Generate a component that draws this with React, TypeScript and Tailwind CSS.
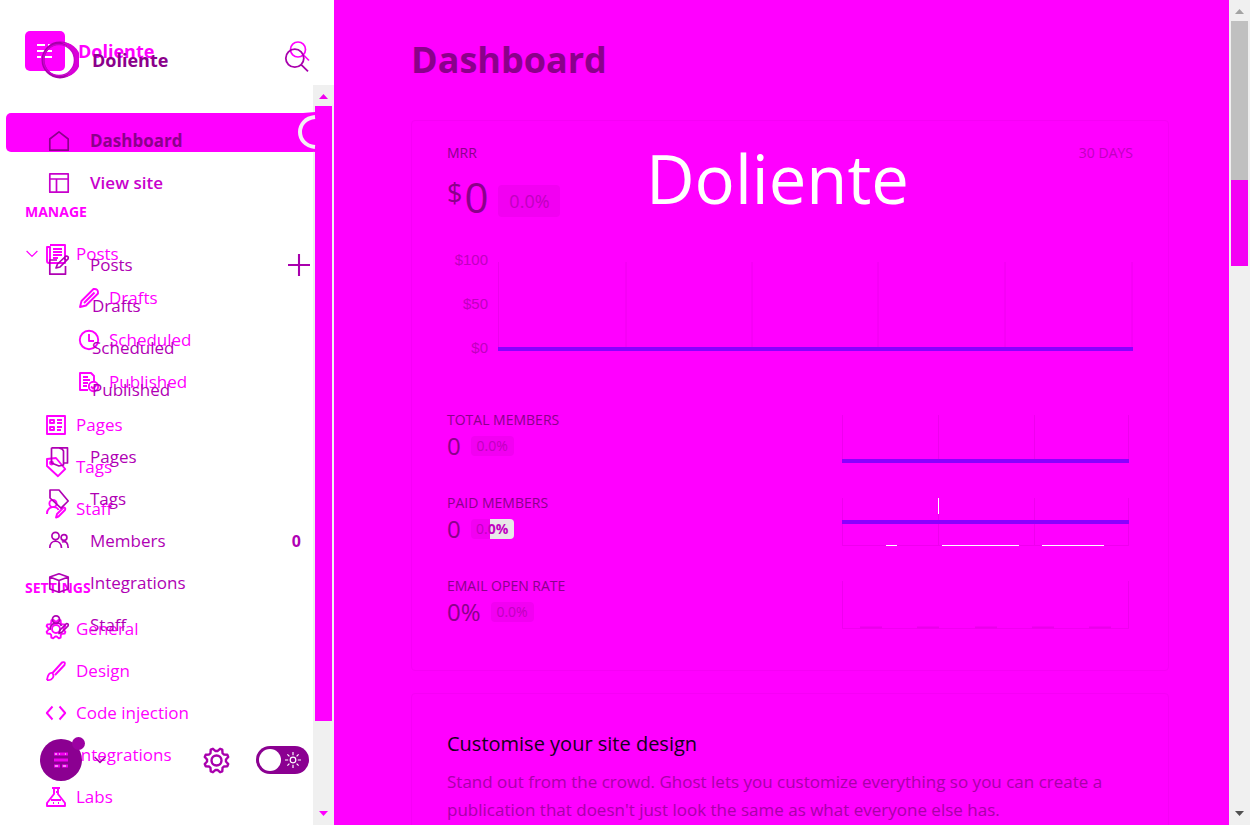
import React from "react";

type Glyph = { d: string; w?: number; size?: string };

function Icon({ d, w = 1.7, size = "size-5" }: Glyph) {
  return (
    <svg viewBox="0 0 20 20" className={`${size} shrink-0 overflow-visible`} fill="none" stroke="currentColor" strokeWidth={w} strokeLinejoin="round" aria-hidden="true">
      <path d={d} />
    </svg>
  );
}

const circle = (x: number, y: number, r: number) => `M${x - r} ${y}a${r} ${r} 0 1 0 ${2 * r} 0a${r} ${r} 0 1 0 ${-2 * r} 0`;

const gearPoints = Array.from({ length: 32 }, (_, i) => {
  const a = (Math.PI * 2 * (i - 0.5)) / 32 + Math.PI / 8;
  const r = i % 4 < 2 ? 9.8 : 7.6;
  return `${(10 + r * Math.cos(a)).toFixed(2)} ${(10 + r * Math.sin(a)).toFixed(2)}`;
});
const gear = `M${gearPoints.join("L")}Z${circle(10, 10, 4)}`;
const staff = `${circle(7, 4.5, 3.6)}M1 15C1 6.5 11 6.5 12.5 11M10 18.5L11 15L17.5 8.5Q20 8.5 19 11L12.5 17.5Z`;

const icons = {
  home: "M.8 8L10 .8L19.2 8V19.2H.8Z",
  layout: "M.8.8H19.2V19.2H.8ZM.8 6H19.2M7.5 6V19.2",
  compose: "M8 5H.8V19.2H16.5V11M7 13L8.5 9L17 1Q20 1 19 4L11 12ZM15 3L17 5",
  plus: "M10 0V20M0 10H20",
  pages: "M2.5 .8H18.5V16H14.5M2.5 .8V16L10 19L14.5 18V4Q14 2 10 1",
  tag: "M1 1H10L19.2 12L12 19.2L1 9Z",
  members: `${circle(6.5, 5, 3.6)}${circle(15, 6.5, 2.9)}M.8 17C.8 8 12 8 12.5 17M13 11C17 9.5 19.2 12 19.2 17`,
  cube: "M10 .8L19.2 4V16L10 19.2L.8 16V4ZM.8 4L10 7.5L19.2 4M10 7.5V19.2",
  staff,
  news: "M4 1H19V19H3Q1 19 1 17V3H4V17M7 5H16M7 8H16M7 11H16M7 14H12",
  pencil: "M1 19L2.5 13L14.5 1Q19.5 .5 19 5.5L7 17.5ZM5 15L15.5 4.5",
  clock: `${circle(10, 10, 9.2)}M10 4V11H15`,
  published: `M9 18H1V1H12L15 4V9M4 5H9M4 8H11M4 11H9M4 14H8${circle(14.5, 14.5, 4.7)}M12 14.5L14 16.5L17.5 13`,
  list: "M1 1H19V19H1ZM4 5H8V8H4ZM4 12H8V15H4ZM11 5H16M11 8H16M11 12H16M11 15H15",
  label: `M1 2L10 1L19.2 12L12 19.2L1 9Z${circle(5.5, 6, 1.5)}`,
  gear,
  brush: "M1 19Q2 11 6.5 12Q9 16 5 18.5Q3 19.5 1 19M6.5 12L16 1.5Q20 0 18.5 4L9 14",
  code: "M6.5 3.5L.8 10L6.5 16.5M13.5 3.5L19.2 10L13.5 16.5",
  labs: "M6 1H14M8 1V7L1 16V19H19V16L12 7V1M5 13H15M7 16H8M12 16H13M10 5H12",
  search: `${circle(9, 8.5, 7.5)}M14.5 14L20 19.5`,
  down: "M1 5L10 14L19 5",
};

type Row = { label: string; icon?: keyof typeof icons; count?: string };

const primary: Row[] = [
  { label: "Pages", icon: "pages" },
  { label: "Tags", icon: "tag" },
  { label: "Members", icon: "members", count: "0" },
  { label: "Integrations", icon: "cube" },
  { label: "Staff", icon: "staff" },
];

function DarkRow({ label, icon, count, weight = "font-medium", tone = "text-[#b000b4]" }: Row & { weight?: string; tone?: string }) {
  return (
    <a href="#" className={`flex h-[42px] items-center pr-[33px] pl-[49px] ${tone}`}>
      {icon ? <Icon d={icons[icon]} /> : <span className="w-[23px]" />}
      <span className={`${icon ? "ml-[21px]" : "ml-5"} ${weight}`}>{label}</span>
      {count && <span className="ml-auto text-base font-bold">{count}</span>}
    </a>
  );
}

function BrightRow({ label, icon, nested }: Row & { nested?: boolean }) {
  return (
    <a href="#" className={`flex h-[42px] items-center gap-[10px] ${nested ? "pl-[79px]" : "pl-[46px]"}`}>
      {icon ? <Icon d={icons[icon]} w={1.9} /> : <span className="w-5" />}
      <span className="font-medium">{label}</span>
    </a>
  );
}

function BrightLayer() {
  return (
    <div className="flex h-full flex-col overflow-hidden text-[#ff00ff]">
      <div className="flex h-[102px] shrink-0 items-center px-[25px]">
        <div className="flex size-10 items-center justify-center rounded-[5px] bg-[#ff00ff] text-white">
          <Icon d="M2 4H10M13 4H17M2 10H17M2 16H6M9 16H17" w={2} />
        </div>
        <strong className="ml-[13px] text-[18px] font-bold">Doliente</strong>
        <span className="ml-auto"><Icon d={icons.search} /></span>
      </div>
      <div className="mt-[11px] h-[39px] shrink-0 pl-[6px]">
        <div className="h-[39px] rounded-[5px] bg-[#ff00ff]" />
      </div>
      <h2 className="mt-[50px] h-5 shrink-0 pl-[25px] text-[14px] leading-5 font-bold">MANAGE</h2>
      <nav className="mt-[11px]" aria-label="Manage">
        <div className="relative">
          <BrightRow label="Posts" icon="news" />
          <span className="absolute top-[15px] left-[26px]"><Icon d={icons.down} size="size-3" w={2} /></span>
        </div>
        <div className="mt-[2px]">
          <BrightRow label="Drafts" icon="pencil" nested />
          <BrightRow label="Scheduled" icon="clock" nested />
          <BrightRow label="Published" icon="published" nested />
        </div>
        <div className="mt-[1px]">
          <BrightRow label="Pages" icon="list" />
          <BrightRow label="Tags" icon="label" />
          <BrightRow label="Staff" icon="staff" />
        </div>
      </nav>
      <h2 className="mt-12 h-5 shrink-0 pl-[25px] text-[14px] leading-5 font-bold">SETTINGS</h2>
      <nav className="mt-[10px]" aria-label="Settings">
        <BrightRow label="General" icon="gear" />
        <BrightRow label="Design" icon="brush" />
        <BrightRow label="Code injection" icon="code" />
        <BrightRow label="Integrations" />
        <BrightRow label="Labs" icon="labs" />
      </nav>
    </div>
  );
}

function DarkLayer() {
  return (
    <div className="absolute inset-0 flex flex-col overflow-hidden">
      <div className="flex h-[120px] shrink-0 items-center pr-[26px] pl-[41px] text-[#8b008b]">
        <svg viewBox="0 0 38 38" className="size-[38px]" fill="none" aria-hidden="true">
          <circle cx="19" cy="19" r="17" stroke="#a600aa" strokeWidth="3" />
          <path d="M20 1.5A17 17 0 0 1 24 36A19 19 0 0 0 20 1.5Z" fill="#d900d9" />
          <circle cx="18" cy="19" r="15.5" stroke="#c900cd" strokeWidth="1.5" />
        </svg>
        <strong className="ml-[13px] text-[18px] font-bold">Doliente</strong>
        <button type="button" aria-label="Search" className="ml-auto text-[#a900ad]"><Icon d={icons.search} size="size-6" w={1.5} /></button>
      </div>
      <nav aria-label="Primary" className="flex flex-col">
        <DarkRow label="Dashboard" icon="home" weight="font-bold" tone="text-[#8b008b]" />
        <DarkRow label="View site" icon="layout" weight="font-semibold" tone="text-[#c800cc]" />
        <div className="relative mt-10">
          <DarkRow label="Posts" icon="compose" />
          <button type="button" aria-label="New post" className="absolute top-[10px] right-6 text-[#a900ad]"><Icon d={icons.plus} size="size-[22px]" w={1.9} /></button>
        </div>
        <div className="-mt-[1px]">
          <DarkRow label="Drafts" />
          <DarkRow label="Scheduled" />
          <DarkRow label="Published" />
        </div>
        <div className="mt-[25px]">
          {primary.map((r) => <DarkRow key={r.label} {...r} />)}
        </div>
      </nav>
      <div className="absolute inset-x-0 bottom-[43px] flex h-[44px] items-center pr-[25px] pl-10 text-[#a900ad]">
        <button type="button" aria-label="Account" className="relative flex size-[42px] items-center justify-center rounded-full bg-[#8b0091] text-[#f000f0]">
          <svg viewBox="0 0 16 16" className="size-4" aria-hidden="true" strokeWidth="3" stroke="currentColor"><path d="M1 2H15M1 8H15M1 14H7M9 14H15" /><path d="M2 2H4M6 2H7M12 2H13M2 14H5M10 14H13" stroke="#fff" strokeWidth="1" /></svg>
          <span className="absolute -top-[2px] -right-[3px] size-[13px] rounded-full bg-[#9c00a2]" />
        </button>
        <span className="ml-3"><Icon d={icons.down} size="size-3" w={2.5} /></span>
        <button type="button" aria-label="Settings" className="ml-auto"><Icon d={gear} size="size-[25px]" w={1.9} /></button>
        <label className="relative ml-[27px] flex h-7 w-[53px] items-center justify-between rounded-full bg-[#8b0091] pr-2 pl-[3px] text-white">
          <input type="checkbox" aria-label="Dark mode" className="absolute inset-0 m-0 size-full appearance-none rounded-full" />
          <span className="size-[22px] rounded-full bg-white" />
          <Icon d={`${circle(10, 10, 3.5)}M10 0V4M10 16V20M0 10H4M16 10H20M3 3L5.5 5.5M14.5 14.5L17 17M17 3L14.5 5.5M5.5 14.5L3 17`} size="size-4" w={1.5} />
        </label>
      </div>
    </div>
  );
}

function Arrow({ up, tone }: { up?: boolean; tone: string }) {
  return (
    <svg viewBox="0 0 21 21" className={`size-[21px] shrink-0 ${tone}`} fill="currentColor" aria-hidden="true">
      <path d={up ? "M10.5 9L15 14H6Z" : "M6 8H15L10.5 13Z"} />
    </svg>
  );
}

function Sidebar() {
  return (
    <aside className="relative w-[334px] shrink-0 overflow-hidden bg-white text-[17px]">
      <BrightLayer />
      <DarkLayer />
      <div className="absolute top-[85px] right-0 bottom-0 flex w-[21px] flex-col bg-[#f0f0f0] px-[2px]">
        <div className="-mx-[2px] h-[21px]"><Arrow up tone="text-[#f000f0]" /></div>
        <div className="h-[615px] bg-[#ff00ff]" />
        <div className="-mx-[2px] mt-auto h-[22px]"><Arrow tone="text-[#ff00ff]" /></div>
      </div>
      <svg viewBox="0 0 36 40" className="absolute top-[112px] right-0 h-10 w-9" fill="none" aria-hidden="true">
        <path d="M5 1L17 0V40L5 39Z" fill="#ff00ff" />
        <path d="M17 5C-3 7-3 33 17 35" stroke="#f4f0f4" strokeWidth="4" />
      </svg>
    </aside>
  );
}

function Grid({ cols, height, width, lineY, children }: { cols: number[]; height: number; width: number; lineY?: number; children?: React.ReactNode }) {
  return (
    <svg viewBox={`0 0 ${width} ${height}`} preserveAspectRatio="none" className="block size-full overflow-visible" fill="none" aria-hidden="true">
      {cols.map((x) => <path key={x} d={`M${x} 0V${height}`} stroke="#ee00ee" />)}
      {children}
      {lineY !== undefined && <path d={`M0 ${lineY}H${width}`} stroke="#8b00ff" strokeWidth="4" />}
    </svg>
  );
}

function Stat({ label, value, badge, chart }: { label: string; value: string; badge: React.ReactNode; chart: React.ReactNode }) {
  return (
    <div className="flex h-[83px] items-start justify-between pr-1">
      <div>
        <h3 className="text-[14px] leading-5 text-[#8b008b]">{label}</h3>
        <div className="flex items-center gap-[10px]">
          <span className="text-[24px] leading-8 text-[#8b008b]">{value}</span>
          {badge}
        </div>
      </div>
      <div className="mt-[5px] h-12 w-[287px]">{chart}</div>
    </div>
  );
}

const plainBadge = <span className="flex h-5 w-[43px] items-center justify-center rounded bg-[#f200f2] text-sm text-[#c000c0]">0.0%</span>;
const splitBadge = (
  <span className="flex h-5 w-[43px] items-center justify-center rounded bg-linear-to-r from-[#f200f2] from-44% to-[#e8e8e8] to-44% text-sm text-[#c000c0]">
    0.<b>0%</b>
  </span>
);

export default function App() {
  return (
    <div className="flex h-screen overflow-hidden bg-[#ff00ff] font-['Open_Sans','Noto_Sans',sans-serif]">
      <Sidebar />
      <main className="relative min-w-0 flex-1 overflow-hidden pr-[60px] pl-[77px]">
        <h1 className="flex h-[120px] items-center text-[36px] font-bold text-[#8b008b]">Dashboard</h1>
        <section className="h-[551px] rounded-[4px] border border-[#f600f6] px-[35px] pt-[22px]">
          <div className="flex items-center justify-between text-[14px] leading-5">
            <h2 className="text-[#8b008b]">MRR</h2>
            <span className="text-[#c000c0]">30 DAYS</span>
          </div>
          <div className="mt-[10px] flex h-[48px] items-center text-[#8b008b]">
            <span className="self-start pt-[4px] text-[27px] leading-8">$</span>
            <span className="ml-[2px] text-[42px] leading-[48px] font-medium">0</span>
            <span className="mt-2 ml-[10px] flex h-8 w-[62px] items-center justify-center rounded bg-[#f200f2] text-[18px] text-[#c000c0]">0.0%</span>
          </div>
          <div className="mt-[29px] flex h-[108px] gap-[10px]">
            <div className="flex h-full w-[41px] flex-col justify-between text-right font-['Liberation_Sans',Arial,sans-serif] text-[15px] leading-5 text-[#c000c0]">
              <span>$100</span><span>$50</span><span>$0</span>
            </div>
            <div className="mt-3 h-[87px] flex-1">
              <Grid width={635} height={87} cols={[0.5, 128, 254, 380, 507, 634]} lineY={87} />
            </div>
          </div>
          <div className="mt-[52px]">
            <Stat label="TOTAL MEMBERS" value="0" badge={plainBadge} chart={<Grid width={287} height={48} cols={[0.5, 96.5, 192.5, 286.5]} lineY={46} />} />
            <Stat
              label="PAID MEMBERS"
              value="0"
              badge={splitBadge}
              chart={
                <Grid width={287} height={48} cols={[0.5, 96.5, 192.5, 286.5]} lineY={24}>
                  <path d="M0 47.5H287" stroke="#ee00ee" />
                  <path d="M96.5 0V16M44 47.5H55M100 47.5H177M200 47.5H262" stroke="#fff" />
                </Grid>
              }
            />
            <Stat
              label="EMAIL OPEN RATE"
              value="0%"
              badge={plainBadge}
              chart={
                <Grid width={287} height={48} cols={[0.5, 286.5]}>
                  <path d="M0 47.5H287" stroke="#f000f0" />
                  <path d="M18 46.5H40M75 46.5H97M133 46.5H155M190 46.5H212M247 46.5H269" stroke="#ea00ea" strokeWidth="2" />
                </Grid>
              }
            />
          </div>
        </section>
        <section className="mt-[22px] h-[300px] rounded-[4px] border border-[#f600f6] px-[35px] pt-[34px]">
          <h2 className="text-[20px] leading-8 font-medium text-[#16001c]">Customise your site design</h2>
          <p className="mt-2 text-[17px] leading-7 text-[#a800a8]">Stand out from the crowd. Ghost lets you customize everything so you can create a publication that doesn't just look the same as what everyone else has.</p>
        </section>
        <div className="pointer-events-none absolute top-[134px] left-[312px] text-[67px] leading-[88px] font-medium text-white">Doliente</div>
      </main>
      <div className="flex w-[21px] shrink-0 flex-col bg-[#f0f0f0]" aria-hidden="true">
        <Arrow up tone="text-[#a3a3a3]" />
        <div className="mx-[2px] h-[159px] bg-[#c0c0c0]" />
        <div className="mx-[2px] h-[86px] bg-[#f400f4]" />
        <div className="mt-auto h-[22px]"><Arrow tone="text-[#505050]" /></div>
      </div>
    </div>
  );
}
